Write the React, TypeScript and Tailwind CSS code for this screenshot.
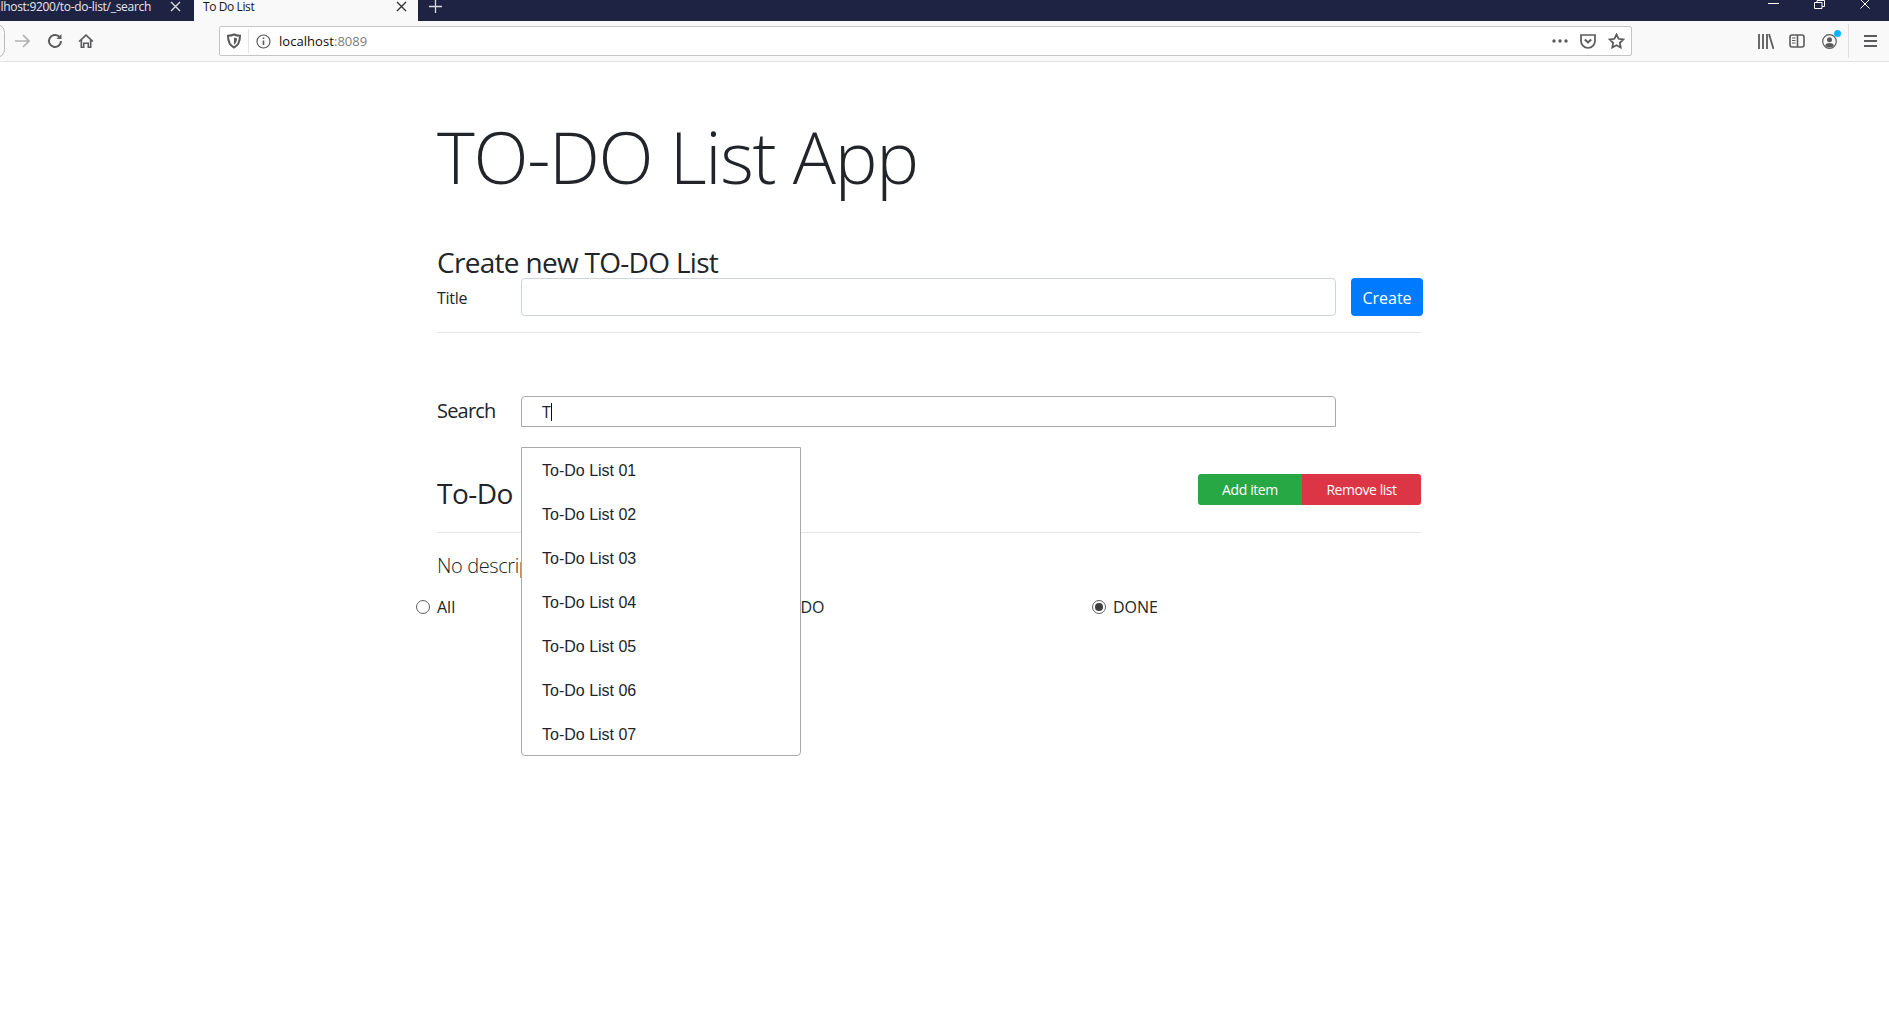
const listItems = [
  "To-Do List 01",
  "To-Do List 02",
  "To-Do List 03",
  "To-Do List 04",
  "To-Do List 05",
  "To-Do List 06",
  "To-Do List 07",
];

const CloseIcon = ({ className }: { className: string }) => (
  <svg className={className} width="11" height="11" viewBox="0 0 11 11" fill="none" stroke="currentColor" strokeWidth="1.4">
    <path d="M1 1l9 9M10 1l-9 9" />
  </svg>
);

const BrowserChrome = () => (
  <header className="h-[62px] font-['Open_Sans',sans-serif]">
    <div className="flex h-[21px] items-center overflow-hidden bg-[#1f2343] text-[12px] text-white">
      <div className="flex h-full w-[194px] shrink-0 items-center justify-end pr-[13px]">
        <span className="whitespace-nowrap text-[#e6e7ec] -mt-[8px] tracking-[-0.3px]">localhost:9200/to-do-list/_search</span>
        <CloseIcon className="ml-[19px] shrink-0 -mt-[8px] text-[#d9dae2]" />
      </div>
      <div className="flex h-full w-[224px] shrink-0 items-center bg-[#f9f9fa] pl-[9px] pr-[11px] text-[#18181a]">
        <span className="-mt-[8px] tracking-[-0.4px]">To Do List</span>
        <CloseIcon className="ml-auto -mt-[8px] text-[#333]" />
      </div>
      <svg className="ml-[11px] -mt-[9px] text-[#d9dae2]" width="13" height="13" viewBox="0 0 13 13" stroke="currentColor" strokeWidth="1.3">
        <path d="M6.5 0v13M0 6.5h13" />
      </svg>
      <div className="ml-auto flex items-start self-start text-white">
        <svg className="mt-[3px]" width="11" height="2" viewBox="0 0 11 2" stroke="currentColor"><path d="M0 .5h11" /></svg>
        <svg className="ml-[35px]" width="11" height="9" viewBox="0 0 11 9" fill="none" stroke="currentColor"><path d="M.5 2.5h7.5v6H.5zM3 2.5V.5h7.5v6H8" /></svg>
        <svg className="ml-[35px] mr-[19px]" width="10" height="9" viewBox="0 0 10 9" fill="none" stroke="currentColor"><path d="M.5-.5l9 9M9.500-.5l-9 9" /></svg>
      </div>
    </div>
    <div className="flex h-[41px] items-center border-b border-[#e3e3e5] bg-[#f9f9fa] text-[#5b5b5d]">
      <div className="-ml-[12px] h-[34px] w-[17px] shrink-0 rounded-full border border-[#b9b9bb]" />
      <svg className="ml-[9px] text-[#b1b1b3]" width="16" height="16" viewBox="0 0 16 16" fill="none" stroke="currentColor" strokeWidth="1.7">
        <path d="M1 8h14M9 2l6 6-6 6" />
      </svg>
      <svg className="ml-[17px]" width="16" height="16" viewBox="0 0 16 16" fill="none" stroke="currentColor" strokeWidth="2">
        <path d="M14 8a6 6 0 1 1-1.900-4.400" />
        <path d="M14.500 1v5h-5" fill="currentColor" stroke="none" />
      </svg>
      <svg className="ml-[15px]" width="16" height="16" viewBox="0 0 16 16" fill="currentColor">
        <path d="M8 1 0.500 8l1 1L2.500 8.200V15h4v-4h3v4h4V8.200l1 .8 1-1zM4.200 13.400V6.700L8 3.200l3.800 3.500v6.700H11V9.500H5v3.900z" />
      </svg>
      <div className="ml-[125px] flex h-[30px] w-[1413px] shrink-0 items-center rounded-[2px] border border-[#c4c4c6] bg-white">
        <svg className="ml-[6px]" width="16" height="16" viewBox="0 0 16 16" fill="none" stroke="currentColor" strokeWidth="2">
          <path d="M8 1.500c2 1 3.500 1.200 6 1.200 0 5.500-1.500 9.500-6 11.800-4.500-2.300-6-6.300-6-11.800 2.500 0 4-.2 6-1.200z" />
          <path d="M8 4.500c1 .5 2 .7 3 .7 0 3-.8 5-3 6.500z" fill="currentColor" stroke="none" />
        </svg>
        <span className="ml-[6px] h-[24px] w-px bg-[#e3e3e5]" />
        <svg className="ml-[7px]" width="15" height="15" viewBox="0 0 15 15" fill="none" stroke="currentColor" strokeWidth="1.200">
          <circle cx="7.500" cy="7.500" r="6.500" />
          <path d="M7.500 6.500v4.500M7.500 3.500v1.500" strokeWidth="1.600" />
        </svg>
        <span className="ml-[8px] mt-px text-[13px] tracking-[0.05px] text-[#0c0c0d]">
          localhost<span className="text-[#7d7d80]">:8089</span>
        </span>
        <svg className="ml-auto" width="16" height="4" viewBox="0 0 16 4" fill="currentColor">
          <circle cx="2" cy="2" r="1.700" /><circle cx="8" cy="2" r="1.700" /><circle cx="14" cy="2" r="1.700" />
        </svg>
        <svg className="ml-[12px]" width="16" height="15" viewBox="0 0 16 15" fill="none" stroke="currentColor" strokeWidth="1.700">
          <path d="M1 1h14v6a7 7 0 0 1-14 0z" />
          <path d="M4.800 5.500 8 8.500l3.200-3" strokeWidth="2" />
        </svg>
        <svg className="ml-[12px] mr-[6px]" width="17" height="16" viewBox="0 0 17 16" fill="none" stroke="currentColor" strokeWidth="1.800">
          <path d="M8.500 1.500l2.100 4.300 4.700.7-3.400 3.300.8 4.700-4.200-2.200-4.200 2.200.8-4.700-3.400-3.300 4.700-.7z" />
        </svg>
      </div>
      <svg className="ml-[126px]" width="16" height="15" viewBox="0 0 16 15" fill="none" stroke="currentColor" strokeWidth="1.800">
        <path d="M1 0v15M5 0v15M9 0v15M11 0l4.500 15" />
      </svg>
      <svg className="ml-[15px]" width="16" height="14" viewBox="0 0 16 14" fill="none" stroke="currentColor" strokeWidth="1.600">
        <rect x="1" y="1" width="14" height="12" rx="2" />
        <path d="M8.500 1v12" />
        <path d="M3 4h3.500M3 6.500h3.500M3 9h3.500" strokeWidth="1" />
      </svg>
      <div className="relative ml-[17px] h-[15px] w-[15px]">
        <svg width="15" height="15" viewBox="0 0 15 15" fill="none" stroke="currentColor" strokeWidth="1.200">
          <circle cx="7.500" cy="7.500" r="6.800" />
          <circle cx="7.500" cy="5.700" r="2.500" fill="currentColor" stroke="none" />
          <path d="M3 11.500c1-2 2.500-2.600 4.500-2.600s3.500.6 4.500 2.600c-1 1.200-2.600 2-4.500 2s-3.500-.8-4.500-2z" fill="currentColor" stroke="none" />
        </svg>
        <span className="absolute -right-[4px] -top-[4px] h-[7px] w-[7px] rounded-full bg-[#0ab4ff]" />
      </div>
      <span className="ml-[11px] h-[34px] w-px bg-[#dfdfe0]" />
      <svg className="ml-[15px]" width="13" height="12" viewBox="0 0 13 12" stroke="currentColor" strokeWidth="1.800">
        <path d="M0 1h13M0 6h13M0 11h13" />
      </svg>
    </div>
  </header>
);

const RadioOption = ({ label, checked = false }: { label: string; checked?: boolean }) => (
  <label className="flex items-center gap-[7px] text-[16px] leading-[24px]">
    <span className="flex h-[14px] w-[14px] items-center justify-center rounded-full border border-[#5f5f60]">
      {checked && <span className="h-[8px] w-[8px] rounded-full bg-[#3f3f40]" />}
    </span>
    {label}
  </label>
);

export default function App() {
  return (
    <div className="min-h-[1028px] bg-white text-[#212529]">
      <BrowserChrome />
      <main className="w-[984px] ml-[437px] pt-[51px] font-['Open_Sans',sans-serif]">
        <h1 className="text-[72px] font-light leading-[86px] tracking-[-1.3px]">TO-DO List App</h1>

        <h3 className="mt-[47px] text-[28px] leading-[32px] tracking-[-0.7px]">Create new TO-DO List</h3>
        <div className="flex items-center">
          <label className="mt-px w-[84px] shrink-0 text-[16px] tracking-[-0.3px]">Title</label>
          <div className="h-[38px] w-[815px] shrink-0 rounded-[4px] border border-[#ced4da] bg-white" />
          <button className="ml-[15px] h-[38px] w-[72px] shrink-0 rounded-[4px] bg-[#007bff] pt-px text-[16px] text-white">Create</button>
        </div>
        <hr className="mt-[16px] border-[#e5e5e5]" />

        <div className="relative mt-[63px] flex items-center">
          <label className="-mt-[2px] w-[84px] shrink-0 text-[20px] tracking-[-0.8px]">Search</label>
          <div className="flex h-[31px] w-[815px] shrink-0 items-center rounded-t-[4px] border border-[#aaaaaa] pl-[20px] text-[16px]">
            T<span className="h-[18px] w-px bg-[#111]" />
          </div>
          <ul className="absolute left-[84px] top-[51px] z-10 h-[309px] w-[280px] rounded-b-[4px] border border-[#aaaaaa] bg-white pt-px font-['Liberation_Sans',sans-serif] text-[16px]">
            {listItems.map((item) => (
              <li key={item} className="flex h-[44px] items-center px-[20px]">
                {item}
              </li>
            ))}
          </ul>
        </div>

        <div className="mt-[47px] flex h-[31px] items-center justify-between">
          <h3 className="mt-[6px] text-[28px] leading-[32px] tracking-[-0.5px]">To-Do List 01</h3>
          <div className="flex text-[14px] text-white">
            <button className="h-[31px] w-[104px] rounded-l-[3px] bg-[#28a745] tracking-[-0.4px]">Add item</button>
            <button className="h-[31px] w-[119px] rounded-r-[3px] bg-[#dc3545] tracking-[-0.45px]">Remove list</button>
          </div>
        </div>
        <hr className="mt-[27px] border-[#e5e5e5]" />

        <p className="mt-[18px] text-[20px] font-light leading-[30px] tracking-[-0.4px]">No description</p>
        <div className="-ml-[21px] mt-[14px] grid w-[1014px] grid-cols-3">
          <RadioOption label="All" />
          <RadioOption label="TO DO" />
          <RadioOption label="DONE" checked />
        </div>
      </main>
    </div>
  );
}
